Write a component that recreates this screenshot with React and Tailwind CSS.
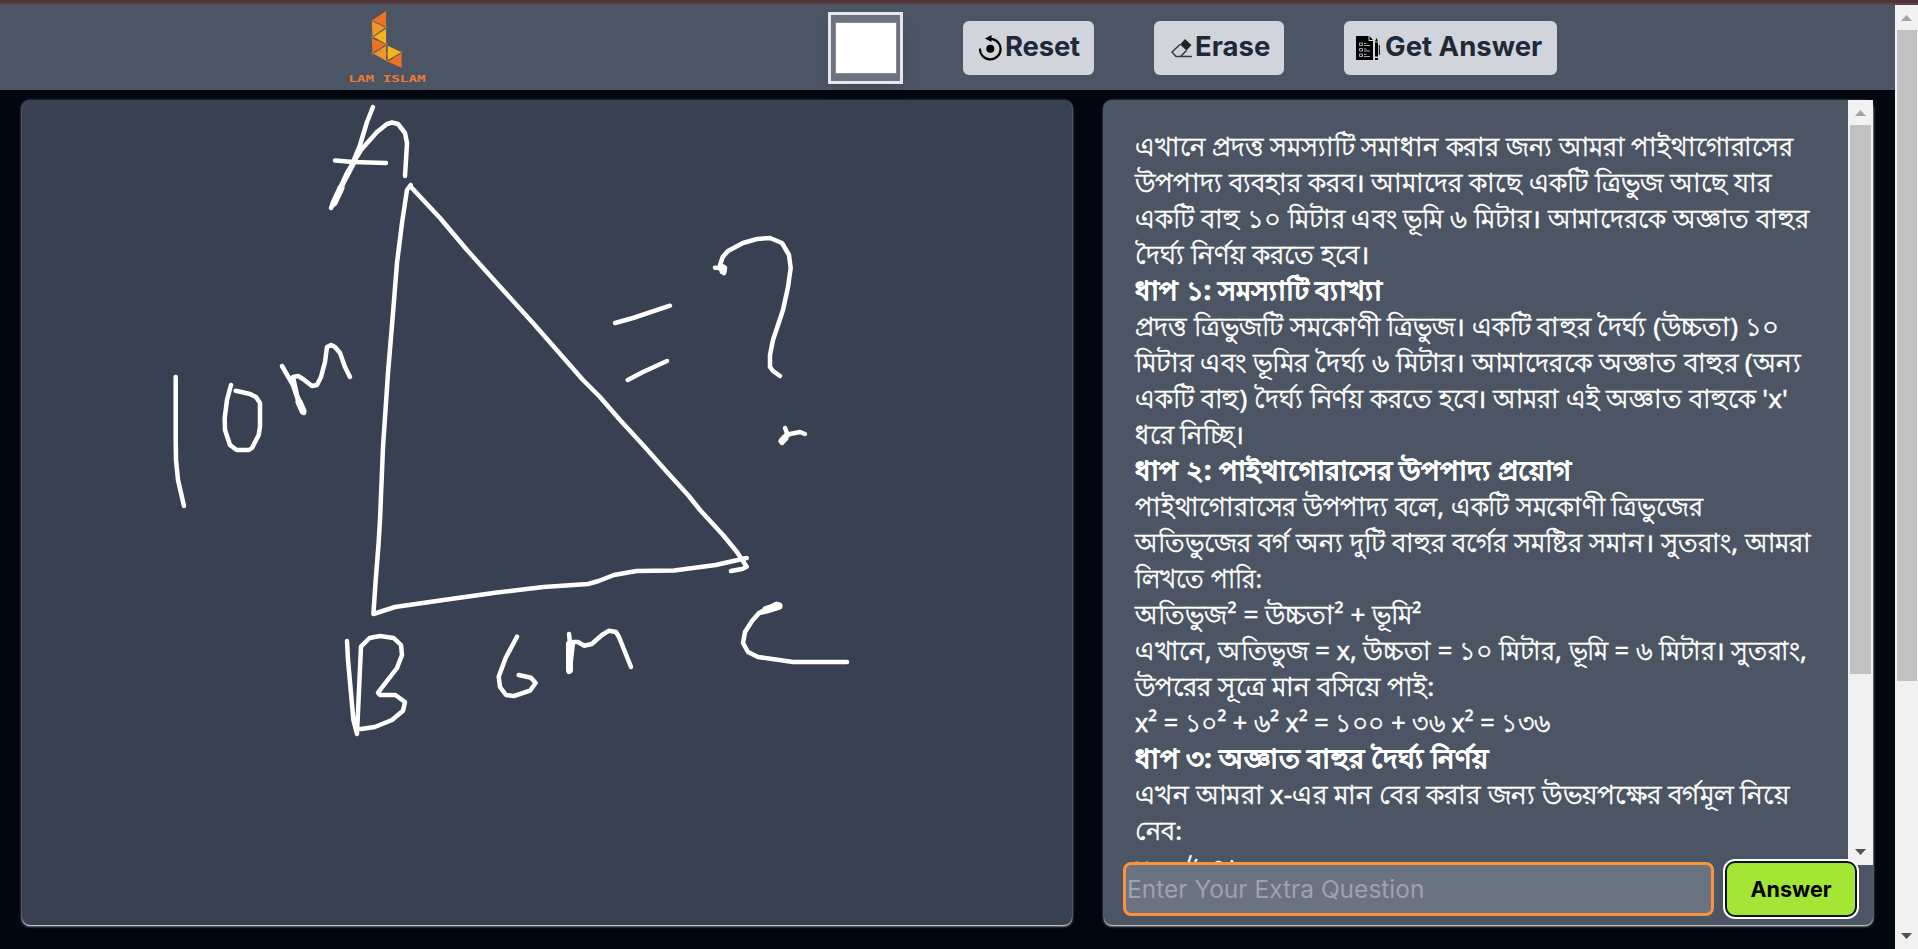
const LINES = [
  { t: "এখানে প্রদত্ত সমস্যাটি সমাধান করার জন্য আমরা পাইথাগোরাসের", s: "scale-x-[0.992]" },
  { t: "উপপাদ্য ব্যবহার করব। আমাদের কাছে একটি ত্রিভুজ আছে যার", s: "scale-x-[1.01]" },
  { t: "একটি বাহু ১০ মিটার এবং ভূমি ৬ মিটার। আমাদেরকে অজ্ঞাত বাহুর", s: "scale-x-[1.002]" },
  { t: "দৈর্ঘ্য নির্ণয় করতে হবে।", s: "scale-x-[1.005]" },
  { t: "ধাপ ১: সমস্যাটি ব্যাখ্যা", b: true, s: "scale-x-[1.058]" },
  { t: "প্রদত্ত ত্রিভুজটি সমকোণী ত্রিভুজ। একটি বাহুর দৈর্ঘ্য (উচ্চতা) ১০", s: "scale-x-[1.002]" },
  { t: "মিটার এবং ভূমির দৈর্ঘ্য ৬ মিটার। আমাদেরকে অজ্ঞাত বাহুর (অন্য", s: "scale-x-[1.022]" },
  { t: "একটি বাহু) দৈর্ঘ্য নির্ণয় করতে হবে। আমরা এই অজ্ঞাত বাহুকে 'x'", s: "scale-x-[0.997]" },
  { t: "ধরে নিচ্ছি।", s: "scale-x-[0.985]" },
  { t: "ধাপ ২: পাইথাগোরাসের উপপাদ্য প্রয়োগ", b: true, s: "scale-x-[1.063]" },
  { t: "পাইথাগোরাসের উপপাদ্য বলে, একটি সমকোণী ত্রিভুজের", s: "scale-x-[0.989]" },
  { t: "অতিভুজের বর্গ অন্য দুটি বাহুর বর্গের সমষ্টির সমান। সুতরাং, আমরা", s: "scale-x-[1.004]" },
  { t: "লিখতে পারি:", s: "scale-x-[0.95]" },
  { t: "অতিভুজ² = উচ্চতা² + ভূমি²", s: "scale-x-[1.005]" },
  { t: "এখানে, অতিভুজ = x, উচ্চতা = ১০ মিটার, ভূমি = ৬ মিটার। সুতরাং,", s: "scale-x-[0.982]" },
  { t: "উপরের সূত্রে মান বসিয়ে পাই:", s: "scale-x-[1.008]" },
  { t: "x² = ১০² + ৬² x² = ১০০ + ৩৬ x² = ১৩৬", s: "scale-x-[0.968]" },
  { t: "ধাপ ৩: অজ্ঞাত বাহুর দৈর্ঘ্য নির্ণয়", b: true, s: "scale-x-[1.067]" },
  { t: "এখন আমরা x-এর মান বের করার জন্য উভয়পক্ষের বর্গমূল নিয়ে", s: "scale-x-[1.017]" },
  { t: "নেব:", s: "scale-x-[0.98]" },
  { t: "x = √১৩৬", s: "scale-x-[1]" },
];

const STROKES = [
  "M373 107L367 122L360 145L353 162L342 185L331 208L347 173L361 150L377 132L387 124L392 122.5L398 124L405 133L407 143L406 160L405 176",
  "M335 160.5L353 162L386 163",
  "M332 206L343 184L354 163",
  "M175.7 377L175.7 440L176 460L178 480L184 506",
  "M231 385L227 400L224.7 418L225 430L230 445L236.7 450L249 450L252 448L258.7 435L260 427L260 403L256 397L250 394L235.7 390.7",
  "M282 366L293 385L298 400L304 413L297 395L293 377L298 376L303 379L312 386L317 385L321 377L325 362L327 347L331 345L335 347L340 353L345 367L350 377",
  "M410.7 185L407 190L402 223L397 263L393 313L388 373L383 447L380 520L378.6 543L375.5 583L373.4 614L395 607L443.6 600L495 592.7L543.5 587L588 584L598.6 581L614 575L636.5 571L674 570.5L715.7 565L746.7 558",
  "M411 187L440 218L467 250L503 290L533 323L583 380L600 397L620 420L643 445L667 472L688 495L700 510L723 535L737 552L746.7 566.7L742 569L731 571",
  "M615 323L633 318L670 305.7",
  "M627.7 380L643 372L667 361",
  "M715 267.7L720 268L724 273L725 268L720 265L722.7 257L728 251L743 243L757 239L770 238L782 243L789 255L790.7 268L788 287L783 310L773 340L770 355L770 367L773 371L780 376",
  "M785 428L787 433L782 443L784 437L790 434L800 432L805 434",
  "M780 605L776 604L759 613L768 611L780 607L777 604L759 613L752 621L745 632L743 643L748 652L758 657L793 662L847 662",
  "M569 634L570 643L569 672L571 660L573 642L578 642L584 645.7L591.7 644L602 635L609 630.7L616 632L619 637L631 667",
  "M517 636.7L505.6 658L498.7 676.7L500 687L506 695L514 696L530 690.7L535.6 683L531 677.7L518.7 675",
  "M347 641L348 660L353.4 720L357 734L359 690L361 646.7L369.6 638L380 636L393.7 638L401 645L402 655L397 668L378 692.7L380 695L395.4 695L405 702L403 710.7L392 720L374.8 727L361 729",
];

const BLOBS = ["M723 268V271", "M782 441L785 438", "M766 609.500L779 606", "M299 402L303 411", "M334 203L341 188", "M569.500 644V670"];

function Scrollbar({ className, thumb }) {
  return (
    <div className={"flex flex-col items-center justify-between bg-[#f1f1f1] " + className}>
      <div className="flex w-full flex-col items-center">
        <svg className="h-[25px] w-[11px]" viewBox="0 0 11 25"><path d="M0 16L5.5 10L11 16Z" fill="#a3a3a3" /></svg>
        <div className={"bg-[#c1c1c1] " + thumb} />
      </div>
      <svg className="h-[25px] w-[11px]" viewBox="0 0 11 25"><path d="M0 9L5.5 15L11 9Z" fill="#505050" /></svg>
    </div>
  );
}

function Logo() {
  return (
    <svg className="ml-[346px] h-[85px] w-[82px]" viewBox="346 5 82 85">
      <path d="M386.1 11V26.7L371.8 20.5ZM371.8 38.3L386.1 44.3L372.5 53ZM401.6 53.3V67.7L387.7 61.7Z" fill="#ee7023" />
      <path d="M371.8 21.3L385.5 27.5L372.5 36.5ZM386.1 45.5L373.5 53.7L386.1 60.7Z" fill="#f0952a" />
      <path d="M386.1 28.7L373.5 37L386.1 43.7ZM387.7 45.7L401.6 52.3L387.7 60Z" fill="#f8b41a" />
      <g fill="#4b5563" stroke="#d99a4a" strokeWidth=".6">
        <circle cx="379.500" cy="23.500" r=".9" /><circle cx="385.800" cy="27" r=".9" /><circle cx="379" cy="32.500" r=".9" />
        <circle cx="372.500" cy="37" r=".9" /><circle cx="379.500" cy="41" r=".9" /><circle cx="386.500" cy="44.500" r=".9" />
        <circle cx="379.500" cy="49.500" r=".9" /><circle cx="372.800" cy="53.500" r=".9" /><circle cx="387" cy="53.500" r=".9" />
        <circle cx="401" cy="52.500" r=".9" /><circle cx="394.500" cy="57" r=".9" /><circle cx="387" cy="61" r=".9" />
      </g>
      <text x="348.5" y="82" fill="#ee7a35" fontFamily="DejaVu Sans Mono" fontWeight="700" fontSize="9.5" textLength="77" lengthAdjust="spacingAndGlyphs">LAM ISLAM</text>
    </svg>
  );
}

const btn = "flex h-[54px] items-center rounded-md bg-[#d1d5db] font-['Inter'] text-[27.5px] font-bold text-[#1f2937] whitespace-nowrap";
const panel = "h-[825px] rounded-[8px] shadow-[0_1px_1px_rgba(255,255,255,0.35),0_1px_3px_rgba(255,255,255,0.8),0_1px_2px_-1px_rgba(255,255,255,0.8)]";

export default function App() {
  return (
    <div className="flex h-[949px] w-[1918px] flex-col overflow-hidden bg-[#020610] font-['Noto_Sans',sans-serif]">
      <div className="h-[3px] shrink-0 bg-[#51333c]" />
      <div className="h-[2px] shrink-0 bg-[#584549]" />
      <div className="flex min-h-0 flex-1">
        <div className="flex w-[1895px] flex-col">
          <header className="flex h-[85px] shrink-0 items-start bg-[#4b5563]">
            <Logo />
            <div className="mt-[7px] ml-[400px] h-[72px] w-[75px] border-[3px] border-[#e5e7eb] bg-[#6b7280] px-[3.5px] py-[7px] shadow-lg">
              <div className="h-[52px] w-[62px] border border-[#8a8a8a] bg-white" />
            </div>
            <div className={btn + " mt-4 ml-[60px] w-[131px] pl-4"}>
              <svg className="h-[26px] w-[23px]" viewBox="0 0 23 26">
                <path d="M1 13.5A10.3 10.3 0 1 0 11.5 3.8" fill="none" stroke="#000" strokeWidth="2.2" />
                <path d="M6 3.5L12.5 0V7Z" fill="#000" />
                <circle cx="11.3" cy="13.7" r="4" fill="#000" />
              </svg>
              <span className="mb-[2px] ml-[3px] tracking-[-0.2px]">Reset</span>
            </div>
            <div className={btn + " mt-4 ml-[60px] w-[130px] pl-[17px]"}>
              <svg className="h-5 w-[22px]" viewBox="0 0 22 20">
                <path d="M14 1L20.5 7L15.5 12.5L9 6.5Z" fill="#22262b" />
                <path d="M9 6.5L1 14L5 18.5H9.5L15.5 12.5M5 18.5H21" fill="none" stroke="#33383e" strokeWidth="1.5" />
              </svg>
              <span className="mb-[2px] ml-[2px]">Erase</span>
            </div>
            <div className={btn + " mt-4 ml-[60px] w-[213px] pl-3"}>
              <svg className="h-6 w-6" viewBox="0 0 24 24">
                <path d="M0 0H12.5V5H17V24H0Z" fill="#000" />
                <path d="M13.5 0L17 4H13.5ZM19 5.5L20.5 2L22 5.5ZM19 6.5H22V20.5H19ZM19 22H22V24H19Z" fill="#000" />
                <path d="M23.3 9V19" stroke="#000" strokeWidth="1" />
                <path d="M3.5 7H6.5V9.5H3.5ZM3.5 12.5H6.5V15H3.5ZM3.5 18H6.5V20.5H3.5ZM8 7.5H10.500M8 9.500H14M8 13H10.500M8 15H14M8 18.500H10.500M8 20.500H14" fill="none" stroke="#d1d5db" strokeWidth=".8" />
              </svg>
              <span className="mb-[2px] ml-[5px]">Get Answer</span>
            </div>
          </header>
          <main className="flex pt-[10px] pl-[22px]">
            <section className={panel + " w-[1050px] bg-[#384151]"}>
              <svg className="h-[825px] w-[1050px]" viewBox="22 100 1050 825">
                <g fill="none" stroke="#fff" strokeWidth="4.500" strokeLinejoin="round" strokeLinecap="round">
                  {STROKES.map((d, i) => <path key={i} d={d} />)}
                  {BLOBS.map((d, i) => <path key={i} d={d} strokeWidth="7" />)}
                </g>
              </svg>
            </section>
            <section className={panel + " ml-[32px] w-[769px] bg-[#4b5563]"}>
              <div className="flex h-[765px] shrink-0">
                <div className="h-full w-[744px] overflow-hidden pt-7 pl-[31px] text-[26px] text-white [-webkit-text-stroke:0.5px_#fff]">
                  {LINES.map((l, i) => (
                    <p key={i} className={"h-9 leading-9 whitespace-nowrap " + (l.b ? "font-bold" : "")}>
                      <span className={"inline-block origin-left " + l.s}>{l.t}</span>
                    </p>
                  ))}
                </div>
                <Scrollbar className="h-full w-[25px]" thumb="h-[549px] w-[21px]" />
              </div>
              <div className="relative -mt-[3px] flex items-center pl-[19px]">
                <input className="h-[54px] w-[591px] rounded-lg border-[3px] border-[#fb923c] bg-[#6b7280] pl-px font-['Inter'] text-[24.5px] placeholder:text-[#9ca3af]" placeholder="Enter Your Extra Question" />
                <button className="ml-[13px] h-[52px] w-[128px] rounded-lg bg-[#a3e635] font-['Inter'] text-[21.5px] font-bold text-black shadow-[0_0_0_2px_#101010,0_0_0_4px_#fff]">Answer</button>
              </div>
            </section>
          </main>
        </div>
        <Scrollbar className="h-full w-[23px]" thumb="h-[651px] w-[20px]" />
      </div>
    </div>
  );
}
